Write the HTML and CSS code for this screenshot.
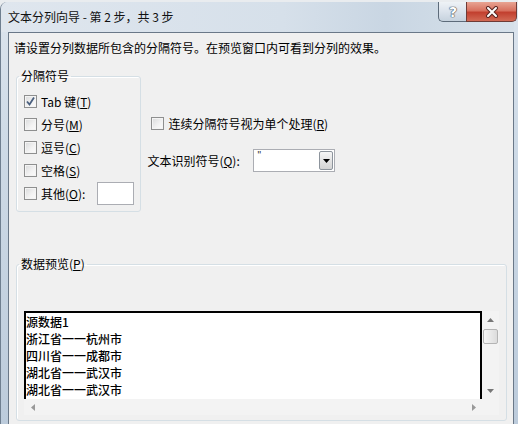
FILE: index.html
```html
<!DOCTYPE html>
<html lang="zh-CN">
<head>
  <meta charset="UTF-8"/>
  <title>文本分列向导 - 第 2 步，共 3 步</title>
  <link rel="stylesheet" href="styles.css">
</head>
<body>

  <div class="window">
    <!-- caption -->
    <div class="titlebar">
      <span class="title">文本分列向导 - 第 2 步，共 3 步</span>
    </div>
    <span class="cap-btn help">?</span>
    <span class="cap-btn close">
      <svg width="16" height="12" viewBox="0 0 16 12">
        <path d="M4 2 L12 10 M12 2 L4 10" stroke="#5a2622" stroke-width="4" stroke-linecap="round"/>
        <path d="M4 2 L12 10 M12 2 L4 10" stroke="#fff" stroke-width="2" stroke-linecap="round"/>
      </svg>
    </span>

    <div class="client">
      <p class="intro">请设置分列数据所包含的分隔符号。在预览窗口内可看到分列的效果。</p>

      <div class="top-area">
        <fieldset class="group delims">
          <legend>分隔符号</legend>
          <div class="rows">
            <label class="check-row">
              <span class="box">
                <svg width="11" height="11" viewBox="0 0 11 11"><path d="M2 5.5 L4.5 8.5 L9 1.5" fill="none" stroke="#4a5f7e" stroke-width="1.8"/></svg>
              </span>
              Tab 键(<u>T</u>)
            </label>
            <label class="check-row"><span class="box"></span>分号(<u>M</u>)</label>
            <label class="check-row"><span class="box"></span>逗号(<u>C</u>)</label>
            <label class="check-row"><span class="box"></span>空格(<u>S</u>)</label>
            <label class="check-row"><span class="box"></span>其他(<u>O</u>):<span class="textbox"></span></label>
          </div>
        </fieldset>

        <div class="options">
          <label class="check-row"><span class="box"></span>连续分隔符号视为单个处理(<u>R</u>)</label>
          <div class="qualifier">
            <span class="q-label">文本识别符号(<u>Q</u>):</span>
            <span class="combo">
              <span class="combo-value">"</span>
              <span class="combo-btn">
                <svg width="7" height="4" viewBox="0 0 7 4"><path d="M0 0 H7 L3.5 4 Z" fill="#000"/></svg>
              </span>
            </span>
          </div>
        </div>
      </div>

      <fieldset class="group preview">
        <legend>数据预览(<u>P</u>)</legend>
        <div class="preview-box">
          <div class="preview-text">源数据1<br>浙江省一一杭州市<br>四川省一一成都市<br>湖北省一一武汉市<br>湖北省一一武汉市</div>
          <div class="vscroll">
            <span class="arrow"><svg width="7" height="4" viewBox="0 0 7 4"><path d="M0 4 H7 L3.5 0 Z" fill="#777"/></svg></span>
            <span class="thumb"></span>
            <span class="spacer"></span>
            <span class="arrow"><svg width="7" height="4" viewBox="0 0 7 4"><path d="M0 0 H7 L3.5 4 Z" fill="#777"/></svg></span>
          </div>
          <div class="hscroll">
            <span class="arrow"><svg width="4" height="7" viewBox="0 0 4 7"><path d="M4 0 V7 L0 3.5 Z" fill="#999"/></svg></span>
            <span class="arrow"><svg width="4" height="7" viewBox="0 0 4 7"><path d="M0 0 V7 L4 3.5 Z" fill="#999"/></svg></span>
          </div>
          <div class="corner"></div>
        </div>
      </fieldset>
    </div>
  </div>

</body>
</html>
```

FILE: styles.css
```css
* { box-sizing: border-box; margin: 0; padding: 0; }
html, body { height: 100%; overflow: hidden; }

body {
  background: #e9ecef;
  font-family: "Noto Sans CJK SC", "Noto Sans", sans-serif;
  font-size: 12px;
  color: #000;
}

.window {
  position: relative;
  height: 422px;
  margin-top: 2px;
  padding: 0 4px 0 7px;
  display: flex;
  flex-direction: column;
  border-radius: 7px 7px 0 0;
  border-left: 1px solid #6f7f90;
  background: linear-gradient(180deg, #dde5ee 0%, #cfdbe7 30%, #bccbdb 100%);
}

.titlebar {
  height: 30px;
  display: flex;
  align-items: center;
  margin-left: -7px;
  padding-left: 7px;
  background: linear-gradient(90deg, #dfe6ee 0%, #d6e0ea 55%, #c9d6e3 75%, #d7e1ea 100%);
  border-radius: 7px 7px 0 0;
}

.title {
  line-height: 16px;
  color: #111;
}

/* caption buttons sit over the frame */
.cap-btn {
  position: absolute;
  top: 0;
  height: 20px;
  display: flex;
  align-items: center;
  justify-content: center;
  border: 1px solid #5d6b7a;
  border-top: 0;
}

.help {
  left: 437px;
  width: 29px;
  border-right: 0;
  border-radius: 0 0 0 5px;
  background: linear-gradient(180deg, #eef2f6 0%, #dbe3ec 50%, #c6d2de 100%);
  color: #fff;
  font-family: "DejaVu Sans", sans-serif;
  font-weight: bold;
  font-size: 14px;
  text-shadow: 0 0 1px #3a4450, 0 0 1px #3a4450, 0 0 1px #3a4450;
}

.close {
  left: 465px;
  width: 51px;
  border-radius: 0 0 5px 0;
  border-color: #6e3b36;
  background: linear-gradient(180deg, #e8a493 0%, #d8715f 45%, #c2402f 55%, #d26a55 100%);
}

.client {
  flex: 1;
  background: #f0f0f0;
  border: 1px solid #6a7888;
  border-bottom: 0;
  overflow: hidden;
}

.intro {
  padding: 7px 0 0 5px;
  line-height: 16px;
}

.top-area {
  display: flex;
  align-items: flex-start;
  margin-top: 12px;
  padding-left: 7px;
}

.group {
  border: 1px solid #d5dfe5;
  border-radius: 3px;
  box-shadow: inset 1px 1px 0 #fff;
}

.group legend {
  margin-left: -5px;
  padding: 0 2px;
  line-height: 16px;
}

.delims {
  width: 125px;
  padding: 0 6px 6px 7px;
}

.rows {
  padding-top: 6px;
}

.check-row {
  display: flex;
  align-items: center;
  height: 23px;
  white-space: nowrap;
}

.box {
  width: 13px;
  height: 13px;
  margin-right: 4px;
  flex: none;
  display: flex;
  align-items: center;
  justify-content: center;
  border: 1px solid #8e8f8f;
  background: linear-gradient(135deg, #d9dadb 0%, #f3f3f3 60%, #fbfbfb 100%);
  box-shadow: inset 0 0 0 1px #f4f4f4;
}

.textbox {
  width: 37px;
  height: 23px;
  margin-left: 12px;
  border: 1px solid #abadb3;
  background: #fff;
}

.options {
  margin-left: 10px;
  padding-top: 44px;
}

.qualifier {
  display: flex;
  align-items: center;
  margin-top: 14px;
  margin-left: -4px;
}

.q-label {
  width: 106px;
}

.combo {
  width: 82px;
  height: 23px;
  display: flex;
  border: 1px solid #abadb3;
  background: #fff;
}

.combo-value {
  flex: 1;
  padding: 1px 0 0 3px;
  font-family: "Liberation Sans", sans-serif;
  font-size: 10px;
  line-height: 10px;
  color: #333;
}

.combo-btn {
  width: 14px;
  margin: 1px;
  display: flex;
  align-items: center;
  justify-content: center;
  border: 1px solid #8d949c;
  border-radius: 2px;
  background: linear-gradient(180deg, #f6f6f6 0%, #e4e4e4 50%, #d4d4d4 100%);
}

.preview {
  width: 491px;
  margin: 44px 0 0 7px;
  padding: 0 7px 5px 7px;
}

.preview-box {
  margin-top: 39px;
  display: grid;
  grid-template-columns: 1fr 17px;
  grid-template-rows: 88px 16px;
}

.preview-text {
  background: #fff;
  border: 2px solid #000;
  border-bottom: 0;
  font-weight: 500;
  line-height: 17px;
  overflow: hidden;
  white-space: nowrap;
}

.vscroll {
  display: flex;
  flex-direction: column;
  align-items: center;
  background: #f3f3f3;
}

.vscroll .arrow {
  height: 17px;
  display: flex;
  align-items: center;
}

.thumb {
  width: 15px;
  height: 15px;
  margin-top: 1px;
  border: 1px solid #b4b4b4;
  border-radius: 2px;
  background: linear-gradient(90deg, #f6f6f6, #dcdcdc);
}

.spacer { flex: 1; }

.hscroll {
  display: flex;
  justify-content: space-between;
  background: #f3f3f3;
}

.hscroll .arrow {
  width: 17px;
  display: flex;
  align-items: center;
  justify-content: center;
}

.corner { background: #f3f3f3; }
```
